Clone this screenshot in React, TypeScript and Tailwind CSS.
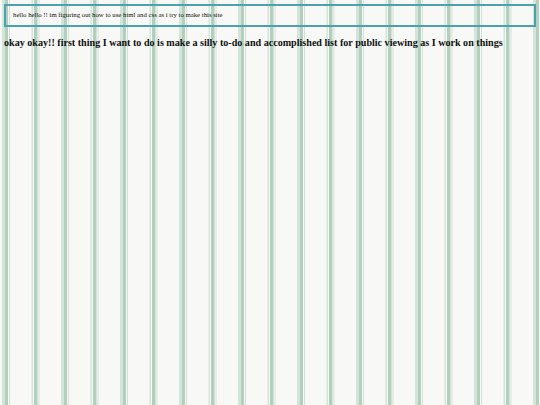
export default function App() {
  return (
    <div className="min-h-screen w-full bg-[#f8f8f6] bg-[repeating-linear-gradient(90deg,transparent_0px,transparent_1.5px,#d3e4d9_2.5px,#d3e4d9_3.5px,transparent_4px,#b2cebd_5px,#b2cebd_7.5px,transparent_8.5px,#d0e2d6_9.5px,transparent_10.5px,transparent_29.5px)] pt-[4px] px-[4px] font-['Liberation_Serif',serif] text-[#111]">
      <div className="border-2 border-[#4aa1b1] h-[23px] flex items-center pl-[7px]">
        <p className="text-[6.75px] leading-none">
          hello hello !! im figuring out how to use html and css as i try to make this site
        </p>
      </div>
      <h2 className="mt-[11px] text-[10.1px] font-bold leading-none">
        okay okay!! first thing I want to do is make a silly to-do and accomplished list for public viewing as I work on things
      </h2>
    </div>
  );
}
